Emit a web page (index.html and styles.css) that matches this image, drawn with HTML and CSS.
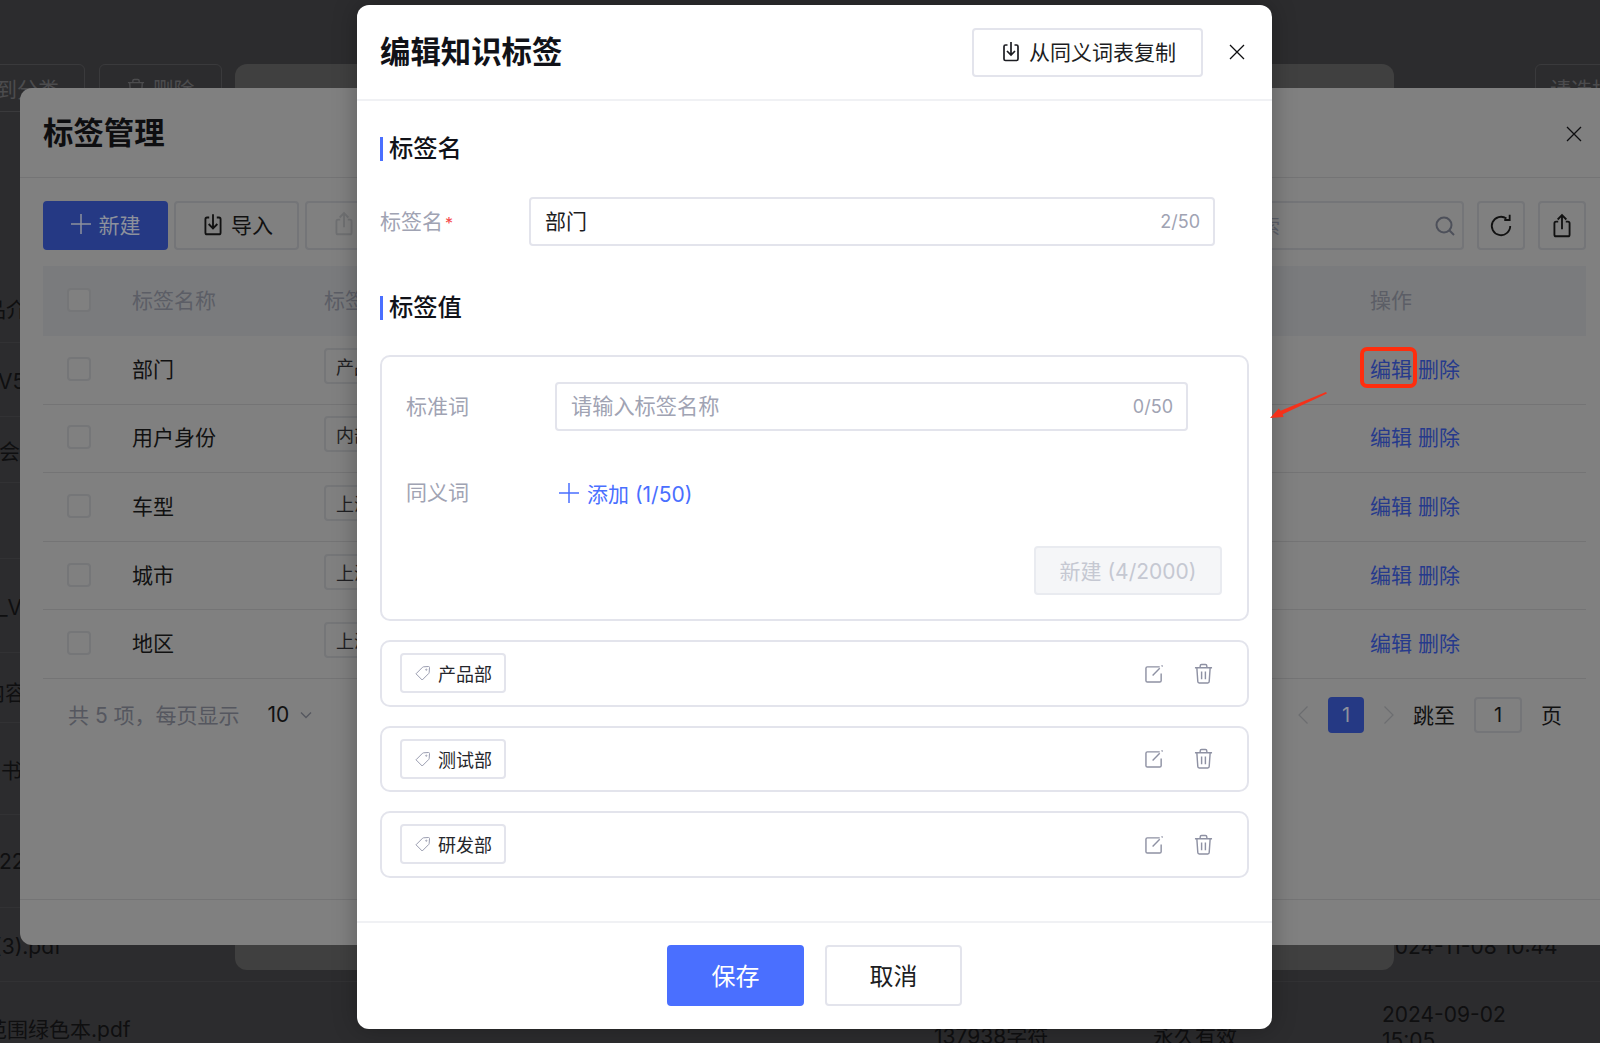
FILE: index.html
```html
<!DOCTYPE html>
<html lang="zh">
<head>
<meta charset="utf-8">
<title>编辑知识标签</title>
<link rel="stylesheet" href="styles.css">
</head>
<body>
<div class="page">
  <div class="page-toolbar">
    <div class="page-btn page-btn-a">移到分类</div>
    <div class="page-btn page-btn-b"><svg class="ic-bg-trash" viewBox="0 0 20 22"><path d="M1 5H19M6.500 5V3A1.500 1.500 0 0 1 8 1.500H12A1.500 1.500 0 0 1 13.500 3V5M3 5 4 19.500A1.500 1.500 0 0 0 5.500 21H14.500A1.500 1.500 0 0 0 16 19.500L17 5"/></svg>删除</div>
    <div class="page-btn page-btn-c">请选择时间</div>
  </div>
  <div class="page-rows">
    <div class="page-row"><span class="n1">产品介绍</span></div>
    <div class="page-row"><span class="n2">手册V5</span></div>
    <div class="page-row"><span class="n3">会议</span></div>
    <div class="page-row"></div>
    <div class="page-row"><span class="n5">方案_V2</span></div>
    <div class="page-row"><span class="n6">的内容</span></div>
    <div class="page-row"><span class="n7">说明书</span></div>
    <div class="page-row"><span class="n8">2022</span></div>
    <div class="page-row"><span class="n9">(3).pdf</span><span class="pr-date pr-date-a">2024-11-08 10:44</span></div>
    <div class="page-row page-row-last"><span class="n10">范围绿色本.pdf</span><span class="pr-chars">137938字符</span><span class="pr-term">永久有效</span><span class="pr-date">2024-09-02<br>15:05</span></div>
  </div>
</div>

<div class="panel"></div>

<section class="manage">
  <header class="manage-head">
    <h2 class="manage-title">标签管理</h2>
    <svg class="ic-close" viewBox="0 0 16 16"><path d="M1 1 15 15M15 1 1 15"/></svg>
  </header>
  <div class="manage-tools">
    <div class="mbtn mbtn-primary"><svg class="ic-plus" viewBox="0 0 20 20"><path d="M10 0V20M0 10H20"/></svg>新建</div>
    <div class="mbtn mbtn-icon"><svg class="ic-24" viewBox="0 0 24 24"><path d="M8.500 6H6.500A1.500 1.500 0 0 0 5 7.500V20a1.500 1.500 0 0 0 1.500 1.500h11A1.500 1.500 0 0 0 19 20V7.500A1.500 1.500 0 0 0 17.500 6H15.500M12 3V15.500M8 12l4 4 4-4"/></svg>导入</div>
    <div class="mbtn mbtn-icon mbtn-off"><svg class="ic-24" viewBox="0 0 24 24"><path d="M8.500 8H6.500A1.500 1.500 0 0 0 5 9.500V20a1.500 1.500 0 0 0 1.500 1.500h11A1.500 1.500 0 0 0 19 20V9.500A1.500 1.500 0 0 0 17.500 8H15.500M12 15V2.500M8 6l4-4 4 4"/></svg>导出</div>
    <div class="tools-right">
      <div class="msearch"><span class="msearch-text">搜索</span><svg class="ic-search" viewBox="0 0 20 20"><circle cx="9" cy="9" r="7.500"/><path d="M14.500 14.500 19 19"/></svg></div>
      <div class="msquare"><svg class="ic-28" viewBox="0 0 24 24"><path d="M20.500 12A8.500 8.500 0 1 1 17 5.100M20 1.500V6.500H15"/></svg></div>
      <div class="msquare"><svg class="ic-28" viewBox="0 0 24 24"><path d="M8.500 8H6.500A1.500 1.500 0 0 0 5 9.500V20a1.500 1.500 0 0 0 1.500 1.500h11A1.500 1.500 0 0 0 19 20V9.500A1.500 1.500 0 0 0 17.500 8H15.500M12 15V2.500M8 6l4-4 4 4"/></svg></div>
    </div>
  </div>
  <div class="table">
    <div class="tr th"><span class="cb"></span><span>标签名称</span><span>标签值</span><span>操作</span></div>
    <div class="tr"><span class="cb"></span><span>部门</span><span class="chip">产品部</span><span class="ops"><a>编辑</a><a>删除</a></span></div>
    <div class="tr"><span class="cb"></span><span>用户身份</span><span class="chip">内部员工</span><span class="ops"><a>编辑</a><a>删除</a></span></div>
    <div class="tr"><span class="cb"></span><span>车型</span><span class="chip">上海</span><span class="ops"><a>编辑</a><a>删除</a></span></div>
    <div class="tr"><span class="cb"></span><span>城市</span><span class="chip">上海</span><span class="ops"><a>编辑</a><a>删除</a></span></div>
    <div class="tr"><span class="cb"></span><span>地区</span><span class="chip">上海</span><span class="ops"><a>编辑</a><a>删除</a></span></div>
  </div>
  <div class="pager">
    <div class="pager-left"><span class="pager-total">共 5 项，每页显示</span><span class="pager-size">10</span><svg class="ic-chev" viewBox="0 0 12 8"><path d="M1 1.500 6 6.500 11 1.500"/></svg></div>
    <div class="pager-right">
      <svg class="ic-page" viewBox="0 0 10 18"><path d="M9.500 .5 1 9 9.500 17.500"/></svg>
      <span class="pager-cur">1</span>
      <svg class="ic-page" viewBox="0 0 10 18"><path d="M.5 .5 9 9 .5 17.500"/></svg>
      <span class="pager-jump">跳至</span>
      <span class="pager-input">1</span>
      <span class="pager-unit">页</span>
    </div>
  </div>
  <div class="manage-foot"></div>
</section>

<section class="edit">
  <header class="edit-head">
    <h1 class="edit-title">编辑知识标签</h1>
    <div class="copy-btn"><svg class="ic-22" viewBox="0 0 24 24"><path d="M8.500 6H6.500A1.500 1.500 0 0 0 5 7.500V20a1.500 1.500 0 0 0 1.500 1.500h11A1.500 1.500 0 0 0 19 20V7.500A1.500 1.500 0 0 0 17.500 6H15.500M12 3V15.500M8 12l4 4 4-4"/></svg>从同义词表复制</div>
    <svg class="ic-close ic-close-edit" viewBox="0 0 16 16"><path d="M1 1 15 15M15 1 1 15"/></svg>
  </header>
  <div class="edit-body">
    <h3 class="sec-title"><span class="sec-text">标签名</span></h3>
    <div class="name-row">
      <label class="name-label">标签名<i class="req">*</i></label>
      <div class="input input-name"><span class="input-val">部门</span><span class="count">2/50</span></div>
    </div>
    <h3 class="sec-title sec-title-2"><span class="sec-text">标签值</span></h3>
    <div class="box">
      <div class="box-row">
        <label class="box-label">标准词</label>
        <div class="input input-std"><span class="input-ph">请输入标签名称</span><span class="count">0/50</span></div>
      </div>
      <div class="box-row box-row-add">
        <label class="box-label">同义词</label>
        <div class="add"><svg class="ic-plus-blue" viewBox="0 0 20 20"><path d="M10 0V20M0 10H20"/></svg>添加 (1/50)</div>
      </div>
      <div class="box-foot"><div class="new-btn">新建 (4/2000)</div></div>
    </div>
    <div class="card">
      <div class="tag"><svg class="ic-tag" viewBox="0 0 16 16"><path d="M1 8.800 7.600 2.200A1.500 1.500 0 0 1 8.700 1.800L13.500 1.500A1 1 0 0 1 14.500 2.500L14.200 7.300A1.500 1.500 0 0 1 13.800 8.400L7.200 15 1 8.800Z"/><circle cx="11.300" cy="4.700" r=".6"/></svg>产品部</div>
      <div class="card-actions">
        <svg class="ic-edit" viewBox="0 0 20 20"><path d="M15.500 3H2.500A1.500 1.500 0 0 0 1 4.500V17.500A1.500 1.500 0 0 0 2.500 19H15.500A1.500 1.500 0 0 0 17 17.500V10M8 12 15.500 4.500M17.500 2.500 18.500 1.500"/></svg>
        <svg class="ic-trash" viewBox="0 0 20 22"><path d="M1 5H19M6.500 5V3A1.500 1.500 0 0 1 8 1.500H12A1.500 1.500 0 0 1 13.500 3V5M3 5 4 19.500A1.500 1.500 0 0 0 5.500 21H14.500A1.500 1.500 0 0 0 16 19.500L17 5M8 9V17M12 9V17"/></svg>
      </div>
    </div>
    <div class="card">
      <div class="tag"><svg class="ic-tag" viewBox="0 0 16 16"><path d="M1 8.800 7.600 2.200A1.500 1.500 0 0 1 8.700 1.800L13.500 1.500A1 1 0 0 1 14.500 2.500L14.200 7.300A1.500 1.500 0 0 1 13.800 8.400L7.200 15 1 8.800Z"/><circle cx="11.300" cy="4.700" r=".6"/></svg>测试部</div>
      <div class="card-actions">
        <svg class="ic-edit" viewBox="0 0 20 20"><path d="M15.500 3H2.500A1.500 1.500 0 0 0 1 4.500V17.500A1.500 1.500 0 0 0 2.500 19H15.500A1.500 1.500 0 0 0 17 17.500V10M8 12 15.500 4.500M17.500 2.500 18.500 1.500"/></svg>
        <svg class="ic-trash" viewBox="0 0 20 22"><path d="M1 5H19M6.500 5V3A1.500 1.500 0 0 1 8 1.500H12A1.500 1.500 0 0 1 13.500 3V5M3 5 4 19.500A1.500 1.500 0 0 0 5.500 21H14.500A1.500 1.500 0 0 0 16 19.500L17 5M8 9V17M12 9V17"/></svg>
      </div>
    </div>
    <div class="card">
      <div class="tag"><svg class="ic-tag" viewBox="0 0 16 16"><path d="M1 8.800 7.600 2.200A1.500 1.500 0 0 1 8.700 1.800L13.500 1.500A1 1 0 0 1 14.500 2.500L14.200 7.300A1.500 1.500 0 0 1 13.800 8.400L7.200 15 1 8.800Z"/><circle cx="11.300" cy="4.700" r=".6"/></svg>研发部</div>
      <div class="card-actions">
        <svg class="ic-edit" viewBox="0 0 20 20"><path d="M15.500 3H2.500A1.500 1.500 0 0 0 1 4.500V17.500A1.500 1.500 0 0 0 2.500 19H15.500A1.500 1.500 0 0 0 17 17.500V10M8 12 15.500 4.500M17.500 2.500 18.500 1.500"/></svg>
        <svg class="ic-trash" viewBox="0 0 20 22"><path d="M1 5H19M6.500 5V3A1.500 1.500 0 0 1 8 1.500H12A1.500 1.500 0 0 1 13.500 3V5M3 5 4 19.500A1.500 1.500 0 0 0 5.500 21H14.500A1.500 1.500 0 0 0 16 19.500L17 5M8 9V17M12 9V17"/></svg>
      </div>
    </div>
  </div>
  <footer class="edit-foot">
    <div class="fbtn fbtn-save">保存</div>
    <div class="fbtn">取消</div>
  </footer>
</section>

<div class="mark-box"></div>
<svg class="mark-arrow" viewBox="0 0 60 28"><path d="M58 0 59 1.500 13 23 14 26 0 27 9 17 11 19.500Z"/></svg>
</body>
</html>
```
FILE: styles.css
```css
* { box-sizing: border-box; }
html, body { margin: 0; padding: 0; height: 100%; }
body {
  position: relative;
  width: 1600px;
  height: 1043px;
  overflow: hidden;
  background: #2c2c2e;
  font-family: Inter, "Noto Sans CJK SC", sans-serif;
  font-size: 21px;
  color: #111;
}
h1, h2, h3 { margin: 0; }
svg { fill: none; stroke: currentColor; flex: none; display: block; }

/* dim page behind everything */
.page { position: absolute; inset: 0; color: #0f0f10; }
.page-toolbar { display: flex; padding-top: 64px; height: 273px; }
.page-btn {
  height: 48px; flex: none; border: 1px solid #3a3a3c; border-radius: 6px; white-space: nowrap;
  display: flex; align-items: center; gap: 8px; color: #4c4c4e; overflow: hidden;
}
.page-btn-a { width: 125px; margin-left: -40px; justify-content: flex-end; padding-right: 25px; }
.page-btn-b { width: 123px; margin-left: 14px; justify-content: center; }
.page-btn-c { width: 130px; margin-left: 1313px; padding-left: 14px; }
.ic-bg-trash { width: 18px; height: 20px; stroke-width: 1.500; }
.page-rows {
  display: grid;
  grid-template-rows: 70px 74px 66px 76px 94px 70px 92px 93px 74px 92px;
  font-size: 21px;
}
.page-row { position: relative; border-bottom: 1px solid #323234; display: flex; align-items: center; white-space: nowrap; }
.page-row-last { border-bottom: 0; }
.n1 { margin-left: -36px; }
.n2 { margin-left: -44px; }
.n3 { margin-left: -1px; }
.n5 { margin-left: -44px; }
.n6 { margin-left: -37px; padding-top: 6px; }
.n7 { margin-left: -41px; }
.n8 { margin-left: -27px; }
.n9 { margin-left: -6px; padding-top: 4px; }
.n10 { margin-left: -14px; }
.pr-chars { position: absolute; left: 934px; top: 42px; line-height: 26px; }
.pr-term { position: absolute; left: 1153px; top: 42px; line-height: 26px; }
.pr-date { position: absolute; left: 1382px; top: 20px; line-height: 26px; }
.pr-date-a { top: 26px; }

.panel {
  position: absolute; left: 235px; top: 64px; width: 1159px; height: 906px;
  background: #404040; border-radius: 12px;
}

/* tag management dialog */
.manage {
  position: absolute; left: 20px; top: 88px; right: 0; height: 857px;
  background: #808080; border-radius: 12px 0 0 12px;
  display: flex; flex-direction: column;
}
.manage-head {
  height: 90px; flex: none; padding: 2px 18px 0 23px;
  display: flex; align-items: center; justify-content: space-between;
  border-bottom: 1px solid #747475;
}
.manage-title { font-size: 30.4px; font-weight: 700; color: #0e0e10; line-height: 1; }
.ic-close { width: 16px; height: 16px; stroke-width: 1.300; color: #0e0e10; }
.manage-tools { display: flex; padding: 23px 14px 0 23px; height: 88px; flex: none; gap: 6px; }
.mbtn {
  width: 125px; height: 49px; border: 2px solid #747578; border-radius: 4px; flex: none;
  display: flex; align-items: center; justify-content: center; gap: 8px; font-size: 21px;
  color: #111; padding-bottom: 3px;
}
.mbtn-icon { gap: 5px; }
.mbtn-primary { background: #253984; border-color: #253984; color: #8d919c; }
.mbtn-off { color: #6f7072; }
.ic-plus { width: 20px; height: 20px; stroke-width: 1.500; }
.ic-24 { width: 26px; height: 26px; stroke-width: 1.700; }
.tools-right { margin-left: auto; display: flex; gap: 13px; }
.msearch {
  width: 300px; height: 49px; border: 2px solid #747578; border-radius: 4px;
  display: flex; align-items: center; justify-content: flex-end; padding-right: 7px; color: #5c5f69; font-size: 20px;
}
.msearch-text { margin-right: 155px; }
.ic-search { width: 20px; height: 20px; stroke-width: 2; color: #4d505a; }
.msquare {
  width: 48px; height: 49px; border: 2px solid #747578; border-radius: 4px;
  display: flex; align-items: center; justify-content: center; color: #111;
}
.ic-28 { width: 26px; height: 26px; stroke-width: 1.700; }
.table { margin: 0 14px 0 23px; flex: none; }
.tr {
  display: grid; grid-template-columns: 89px 192px 1fr 216px; align-items: center;
  height: 68.6px; border-bottom: 1px solid #747475; padding-bottom: 4px;
}
.tr:first-child { height: 70px; }
.th { background: #7a7b7d; color: #5c5e66; border-bottom: 0; }
.cb { width: 24px; height: 24px; margin: 2px 0 0 24px; background: #808080; border: 2px solid #757678; border-radius: 4px; }
.chip {
  justify-self: start; height: 36px; margin-bottom: 4px; padding: 0 10px; border: 2px solid #757678; border-radius: 4px;
  display: flex; align-items: center; font-size: 18px; color: #1f1f22;
}
.ops { display: flex; gap: 6px; color: #263a8c; }
.pager {
  flex: 1; display: flex; justify-content: space-between; padding: 18px 38px 0 48px; align-items: flex-start;
}
.pager-left { display: flex; align-items: center; height: 36px; }
.pager-total { color: #55575f; padding-bottom: 2px; }
.pager-size { margin-left: 28px; color: #111; }
.ic-chev { width: 12px; height: 8px; margin-left: 11px; stroke-width: 1.300; color: #55575f; }
.pager-right { display: flex; align-items: center; height: 36px; }
.ic-page { width: 10px; height: 18px; stroke-width: 1.200; color: #6c6d70; }
.pager-cur {
  width: 36px; height: 36px; margin: 0 20px; border-radius: 4px; background: #253984; color: #8d919c;
  display: flex; align-items: center; justify-content: center; font-size: 20px;
}
.pager-jump { margin-left: 19px; padding-bottom: 2px; }
.pager-input {
  width: 48px; height: 36px; margin-left: 19px; border: 2px solid #747578; border-radius: 4px;
  display: flex; align-items: center; justify-content: center; font-size: 20px;
}
.pager-unit { margin-left: 19px; padding-bottom: 2px; }
.manage-foot { height: 46px; flex: none; border-top: 1px solid #747475; }

/* edit dialog */
.edit {
  position: absolute; left: 357px; top: 5px; width: 915px; height: 1024px;
  background: #fff; border-radius: 12px; box-shadow: 0 0 24px rgba(0,0,0,.28);
  display: flex; flex-direction: column;
}
.edit-head {
  height: 96px; flex: none; padding: 0 27px 0 23px; border-bottom: 2px solid #f0f1f4;
  display: flex; align-items: center;
}
.edit-title { font-size: 30.4px; font-weight: 700; color: #111218; line-height: 1; flex: 1; }
.copy-btn {
  width: 231px; height: 49px; border: 2px solid #e3e4ec; border-radius: 4px;
  display: flex; align-items: center; justify-content: center; gap: 6px; font-size: 21px; color: #1c1d22; padding-bottom: 2px;
}
.ic-22 { width: 24px; height: 24px; stroke-width: 1.700; }
.ic-close-edit { margin-left: 26px; }
.edit-body { flex: 1; padding: 36px 23px 0; display: flex; flex-direction: column; }
.sec-title {
  font-size: 24.3px; font-weight: 500; line-height: 22px; color: #111218;
  border-left: 3px solid #4a6fff; padding-left: 6px; height: 24px;
}
.sec-text { display: block; }
.name-row { display: flex; align-items: center; margin-top: 36px; padding-right: 34px; }
.name-label { width: 149px; color: #a0a3b3; flex: none; padding-bottom: 4px; }
.req { color: #f5484a; font-style: normal; font-size: 16px; margin-left: 2px; }
.input {
  height: 49px; border: 2px solid #e3e4ec; border-radius: 4px; flex: 1;
  display: flex; align-items: center; justify-content: space-between; padding: 0 13px 3px 14px;
}
.input-val { color: #1c1d22; }
.input-ph { color: #a0a3b3; font-size: 21.2px; padding-bottom: 2px; }
.count { font-size: 18px; color: #a0a3b3; padding-top: 2px; }
.sec-title-2 { margin-top: 50px; }
.box {
  margin-top: 35px; height: 266px; flex: none; border: 2px solid #e3e4ec; border-radius: 10px;
  padding: 25px 25px 24px 24px; display: flex; flex-direction: column;
}
.box-row { display: flex; align-items: center; }
.box-row-add { margin-top: 45px; }
.box-label { width: 149px; color: #a0a3b3; flex: none; padding-bottom: 4px; }
.input-std { flex: none; width: 633px; }
.add { display: flex; align-items: center; gap: 8px; color: #4a6fff; font-size: 21px; margin-left: 4px; padding-bottom: 1px; }
.ic-plus-blue { width: 20px; height: 20px; stroke-width: 1.500; }
.box-foot { margin-top: auto; display: flex; justify-content: flex-end; }
.new-btn {
  width: 188px; height: 49px; background: #f5f6f8; border: 2px solid #e9ebf0; border-radius: 4px;
  display: flex; align-items: center; justify-content: center; color: #c5c8d2; font-size: 21px; padding-bottom: 2px;
}
.card {
  margin-top: 19px; height: 66.5px; flex: none; border: 2px solid #e3e4ec; border-radius: 10px;
  padding: 0 34px 0 18px; display: flex; align-items: center; justify-content: space-between;
}
.tag {
  width: 106px; height: 40px; border: 2px solid #e3e4ec; border-radius: 4px;
  display: flex; align-items: center; padding-left: 13px; gap: 7px; font-size: 18px; color: #25262b;
}
.ic-tag { width: 16px; height: 16px; stroke-width: 1; color: #9a9db0; }
.card-actions { display: flex; align-items: center; gap: 30px; color: #8e91a3; }
.ic-edit { width: 19px; height: 19px; stroke-width: 1.500; }
.ic-trash { width: 19px; height: 21px; stroke-width: 1.500; }
.edit-foot {
  height: 108px; flex: none; border-top: 2px solid #f0f1f4; padding-top: 22px;
  display: flex; justify-content: center; gap: 21px;
}
.fbtn {
  width: 137px; height: 61px; border: 2px solid #e3e4ec; border-radius: 4px;
  display: flex; align-items: center; justify-content: center; font-size: 24px; color: #1c1d22; padding-bottom: 2px;
}
.fbtn-save { background: #4a6fff; border-color: #4a6fff; color: #fff; }

/* annotation drawn on the screenshot */
.mark-box {
  position: absolute; left: 1360px; top: 347px; width: 57px; height: 41px;
  border: 4px solid #ff2d0d; border-radius: 7px;
}
.mark-arrow {
  position: absolute; left: 1270px; top: 392px; width: 58px; height: 27px;
  fill: #f5311a; stroke: none;
}
```
